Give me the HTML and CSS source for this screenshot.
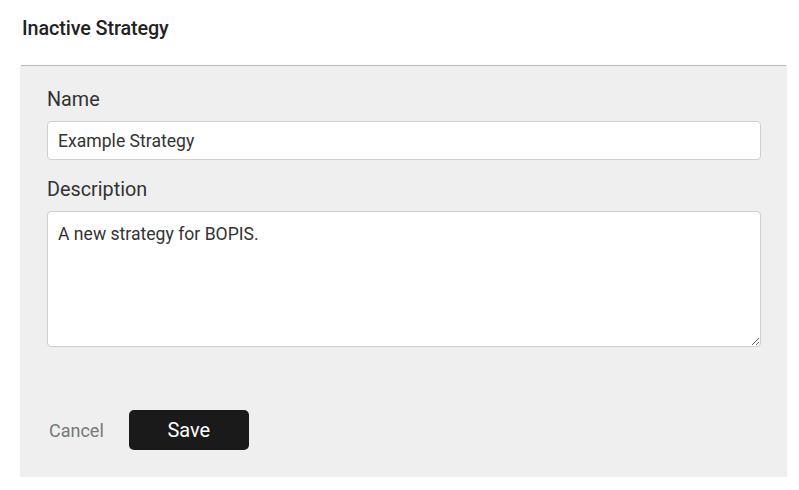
FILE: index.html
```html
<!DOCTYPE html>
<html>
<head>
<meta charset="utf-8">
<link rel="stylesheet" href="styles.css">
</head>
<body>
<h1 class="title">Inactive Strategy</h1>
<div class="card">
  <label class="label" for="name">Name</label>
  <input class="input" id="name" type="text" value="Example Strategy">
  <label class="label label-desc" for="desc">Description</label>
  <textarea class="textarea" id="desc">A new strategy for BOPIS.</textarea>
  <div class="actions">
    <button class="cancel" type="button">Cancel</button>
    <button class="save" type="button">Save</button>
  </div>
</div>
</body>
</html>
```
FILE: styles.css
```css
* { box-sizing: border-box; }
body {
  margin: 0;
  background: #fff;
  font-family: Roboto, "Liberation Sans", sans-serif;
  color: #333;
}
.title {
  margin: 0;
  padding: 17px 0 0 22px;
  height: 65px;
  font-size: 19.8px;
  font-weight: 500;
  line-height: 24px;
  color: #222;
  letter-spacing: -0.1px;
}
.card {
  width: 765px;
  margin-left: 21px;
  background: #efefef;
  border-top: 1px solid #bdbdbd;
  box-shadow: 0 1px 2px rgba(0,0,0,0.2);
  padding: 22px 25px 27px 26px;
  display: flex;
  flex-direction: column;
}
.label {
  font-size: 19.8px;
  line-height: 24px;
  color: #333;
  margin-bottom: 9px;
}
.input, .textarea {
  width: 714px;
  border: 1px solid #cfcfcf;
  border-radius: 4px;
  background: #fff;
  font-family: Roboto, "Liberation Sans", sans-serif;
  font-size: 17.6px;
  color: #333;
  padding: 0 10px;
  outline: none;
}
.input {
  height: 39px;
  margin-bottom: 18px;
}
.textarea {
  height: 136px;
  padding-top: 12px;
  resize: vertical;
  line-height: 20px;
  margin-bottom: 63px;
}
.actions {
  display: flex;
  align-items: center;
  gap: 25px;
}
.cancel {
  border: none;
  background: none;
  padding: 0 0 0 2px;
  font-family: Roboto, "Liberation Sans", sans-serif;
  font-size: 18px;
  color: #777;
}
.save {
  width: 120px;
  height: 40px;
  border: none;
  border-radius: 5px;
  background: #1a1a1a;
  color: #fff;
  font-family: Roboto, "Liberation Sans", sans-serif;
  font-size: 20px;
}
```
